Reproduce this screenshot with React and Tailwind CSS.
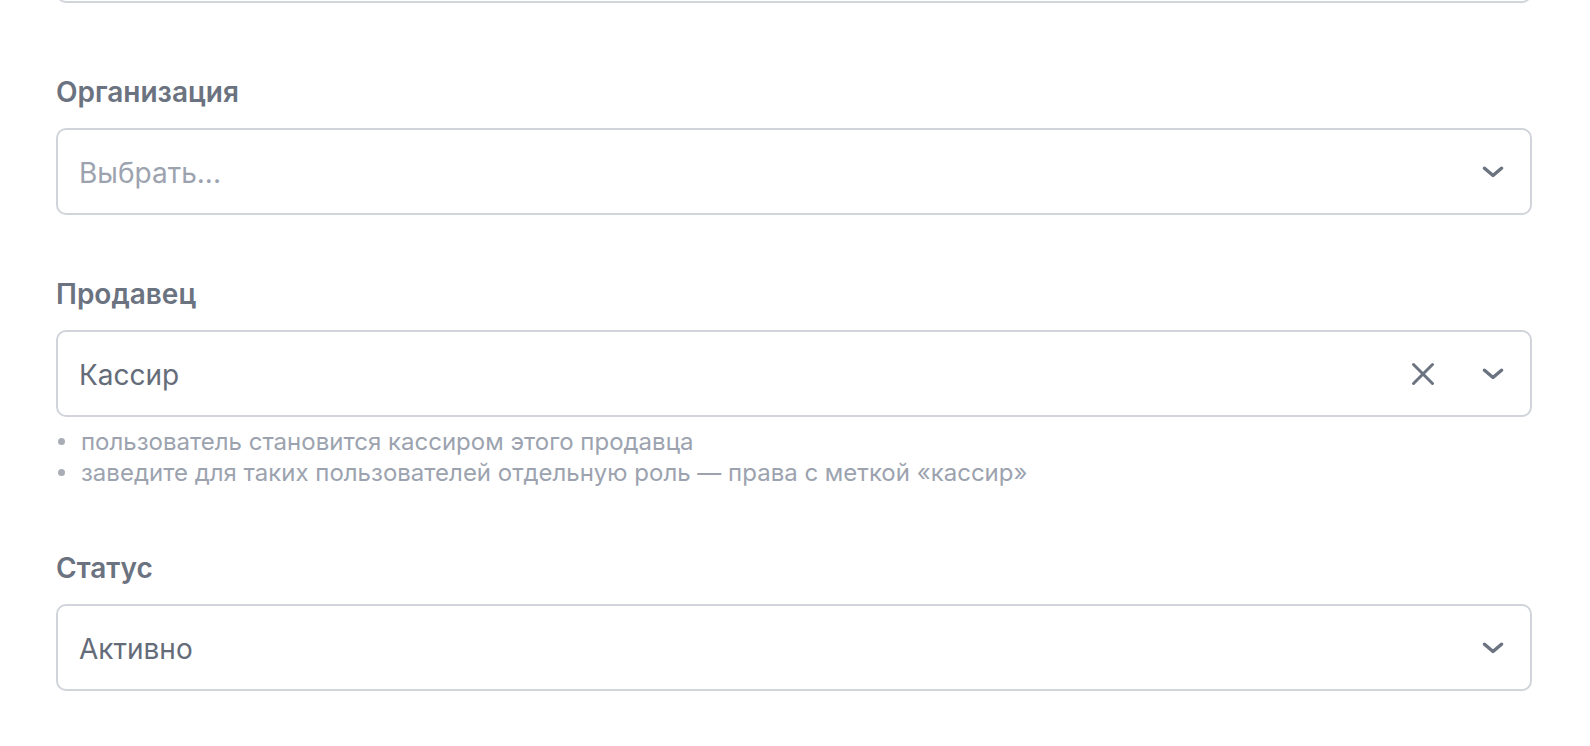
import React from 'react';

const Chevron = () => (
    <svg width="22" height="12" viewBox="0 0 22 12" fill="none" className="shrink-0">
        <path d="M2.5 2.2 L11 9.5 L19.5 2.2" stroke="#6b7280" strokeWidth="3.4" strokeLinecap="round" strokeLinejoin="round" />
    </svg>
);

const Cross = () => (
    <svg width="24" height="24" viewBox="0 0 24 24" fill="none" className="shrink-0">
        <path d="M2.5 2.5 L21.5 21.5 M21.5 2.5 L2.5 21.5" stroke="#6b7280" strokeWidth="3" strokeLinecap="round" />
    </svg>
);

const Select = ({ value, placeholder, clearable }) => (
    <div className="mt-[18px] h-[87px] flex items-center rounded-[10px] border-2 border-[#d1d5db] bg-white pl-[21px] pr-[26px]">
        <span className={`flex-1 pt-[3px] text-[28px] leading-[40px] ${value ? 'text-[#656c79]' : 'text-[#9ca3af]'}`}>
            {value || placeholder}
        </span>
        {clearable && (
            <div className="mr-[47px] flex items-center">
                <Cross />
            </div>
        )}
        <Chevron />
    </div>
);

const Label = ({ children, className = '' }) => (
    <div className={`text-[28px] leading-[36px] font-semibold text-[#6b7280] ${className}`}>{children}</div>
);

const hints = [
    'пользователь становится кассиром этого продавца',
    'заведите для таких пользователей отдельную роль — права с меткой «кассир»',
];

export default function App() {
    return (
        <div
            className="h-screen overflow-hidden bg-white pl-[56px]"
            style={{ fontFamily: 'Inter, "Noto Sans", sans-serif' }}
        >
            <div className="w-[1476px]">
                {/* tail of the previous field */}
                <div className="-mt-[84px] h-[87px] rounded-[10px] border-2 border-[#d1d5db]" />

                <Label className="mt-[71px]">Организация</Label>
                <Select placeholder="Выбрать..." />

                <Label className="mt-[61px]">Продавец</Label>
                <Select value="Кассир" clearable />
                <ul className="mt-[9px] pl-[2px]">
                    {hints.map((h) => (
                        <li key={h} className="flex items-center gap-[16px] text-[24px] leading-[31px] text-[#9ca3af]">
                            <span className="w-[7px] h-[7px] rounded-full bg-[#a8adb6] shrink-0" />
                            {h}
                        </li>
                    ))}
                </ul>

                <Label className="mt-[62px]">Статус</Label>
                <Select value="Активно" />
            </div>
        </div>
    );
}
